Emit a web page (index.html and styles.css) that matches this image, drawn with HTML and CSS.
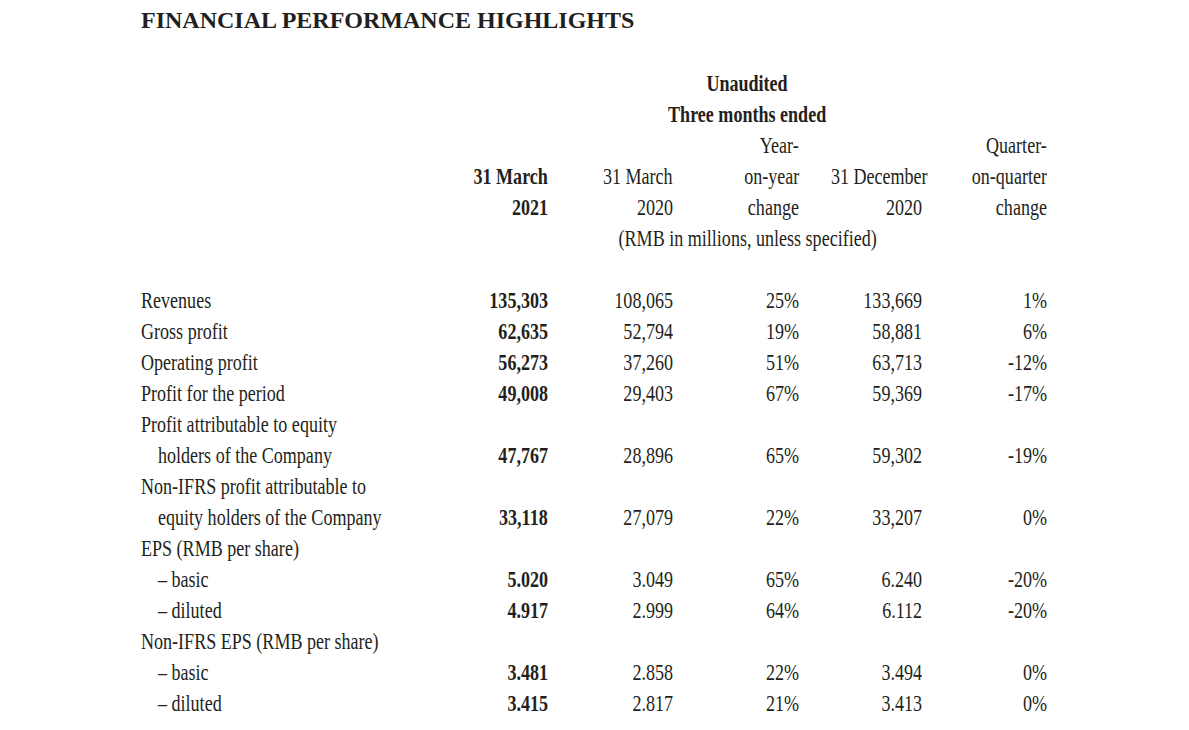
FILE: index.html
```html
<!DOCTYPE html>
<html>
<head>
<meta charset="utf-8">
<link rel="stylesheet" href="styles.css">
</head>
<body>
<div class="page">
  <h1 class="title">FINANCIAL PERFORMANCE HIGHLIGHTS</h1>
  <div class="table">
    <div class="row"><div class="cell wide b"><span class="t">Unaudited</span></div></div>
    <div class="row"><div class="cell wide b"><span class="t">Three months ended</span></div></div>
    <div class="row">
      <div class="cell lab"></div><div class="cell num"></div><div class="cell num"></div>
      <div class="cell num"><span class="t">Year-</span></div><div class="cell num"></div>
      <div class="cell num"><span class="t">Quarter-</span></div>
    </div>
    <div class="row">
      <div class="cell lab"></div>
      <div class="cell num b"><span class="t">31 March</span></div>
      <div class="cell num"><span class="t">31 March</span></div>
      <div class="cell num"><span class="t">on-year</span></div>
      <div class="cell num"><span class="t">31 December</span></div>
      <div class="cell num"><span class="t">on-quarter</span></div>
    </div>
    <div class="row">
      <div class="cell lab"></div>
      <div class="cell num b"><span class="t">2021</span></div>
      <div class="cell num"><span class="t">2020</span></div>
      <div class="cell num"><span class="t">change</span></div>
      <div class="cell num"><span class="t">2020</span></div>
      <div class="cell num"><span class="t">change</span></div>
    </div>
    <div class="row"><div class="cell wide"><span class="t">(RMB in millions, unless specified)</span></div></div>
    <div class="row blank"></div>

    <div class="row">
      <div class="cell lab"><span class="t">Revenues</span></div>
      <div class="cell num b"><span class="t">135,303</span></div>
      <div class="cell num"><span class="t">108,065</span></div>
      <div class="cell num"><span class="t">25%</span></div>
      <div class="cell num"><span class="t">133,669</span></div>
      <div class="cell num"><span class="t">1%</span></div>
    </div>
    <div class="row">
      <div class="cell lab"><span class="t">Gross profit</span></div>
      <div class="cell num b"><span class="t">62,635</span></div>
      <div class="cell num"><span class="t">52,794</span></div>
      <div class="cell num"><span class="t">19%</span></div>
      <div class="cell num"><span class="t">58,881</span></div>
      <div class="cell num"><span class="t">6%</span></div>
    </div>
    <div class="row">
      <div class="cell lab"><span class="t">Operating profit</span></div>
      <div class="cell num b"><span class="t">56,273</span></div>
      <div class="cell num"><span class="t">37,260</span></div>
      <div class="cell num"><span class="t">51%</span></div>
      <div class="cell num"><span class="t">63,713</span></div>
      <div class="cell num"><span class="t">-12%</span></div>
    </div>
    <div class="row">
      <div class="cell lab"><span class="t">Profit for the period</span></div>
      <div class="cell num b"><span class="t">49,008</span></div>
      <div class="cell num"><span class="t">29,403</span></div>
      <div class="cell num"><span class="t">67%</span></div>
      <div class="cell num"><span class="t">59,369</span></div>
      <div class="cell num"><span class="t">-17%</span></div>
    </div>
    <div class="row">
      <div class="cell lab"><span class="t">Profit attributable to equity</span></div>
    </div>
    <div class="row">
      <div class="cell lab ind"><span class="t">holders of the Company</span></div>
      <div class="cell num b"><span class="t">47,767</span></div>
      <div class="cell num"><span class="t">28,896</span></div>
      <div class="cell num"><span class="t">65%</span></div>
      <div class="cell num"><span class="t">59,302</span></div>
      <div class="cell num"><span class="t">-19%</span></div>
    </div>
    <div class="row">
      <div class="cell lab"><span class="t">Non-IFRS profit attributable to</span></div>
    </div>
    <div class="row">
      <div class="cell lab ind"><span class="t">equity holders of the Company</span></div>
      <div class="cell num b"><span class="t">33,118</span></div>
      <div class="cell num"><span class="t">27,079</span></div>
      <div class="cell num"><span class="t">22%</span></div>
      <div class="cell num"><span class="t">33,207</span></div>
      <div class="cell num"><span class="t">0%</span></div>
    </div>
    <div class="row">
      <div class="cell lab"><span class="t">EPS (RMB per share)</span></div>
    </div>
    <div class="row">
      <div class="cell lab ind"><span class="t">– basic</span></div>
      <div class="cell num b"><span class="t">5.020</span></div>
      <div class="cell num"><span class="t">3.049</span></div>
      <div class="cell num"><span class="t">65%</span></div>
      <div class="cell num"><span class="t">6.240</span></div>
      <div class="cell num"><span class="t">-20%</span></div>
    </div>
    <div class="row">
      <div class="cell lab ind"><span class="t">– diluted</span></div>
      <div class="cell num b"><span class="t">4.917</span></div>
      <div class="cell num"><span class="t">2.999</span></div>
      <div class="cell num"><span class="t">64%</span></div>
      <div class="cell num"><span class="t">6.112</span></div>
      <div class="cell num"><span class="t">-20%</span></div>
    </div>
    <div class="row">
      <div class="cell lab"><span class="t">Non-IFRS EPS (RMB per share)</span></div>
    </div>
    <div class="row">
      <div class="cell lab ind"><span class="t">– basic</span></div>
      <div class="cell num b"><span class="t">3.481</span></div>
      <div class="cell num"><span class="t">2.858</span></div>
      <div class="cell num"><span class="t">22%</span></div>
      <div class="cell num"><span class="t">3.494</span></div>
      <div class="cell num"><span class="t">0%</span></div>
    </div>
    <div class="row">
      <div class="cell lab ind"><span class="t">– diluted</span></div>
      <div class="cell num b"><span class="t">3.415</span></div>
      <div class="cell num"><span class="t">2.817</span></div>
      <div class="cell num"><span class="t">21%</span></div>
      <div class="cell num"><span class="t">3.413</span></div>
      <div class="cell num"><span class="t">0%</span></div>
    </div>
  </div>
</div>
</body>
</html>
```

FILE: styles.css
```css
html, body {
  margin: 0;
  padding: 0;
  background: #ffffff;
}

body {
  font-family: "Liberation Serif", "Times New Roman", serif;
  color: #231f20;
  overflow: hidden;
}

.page {
  padding: 6px 0 0 141px;
}

.title {
  margin: 0;
  font-size: 24px;
  line-height: 28px;
  font-weight: bold;
  letter-spacing: 0;
}

.table {
  margin-top: 34px;
  font-size: 24px;
}

.row {
  display: grid;
  grid-template-columns: 307px 100px 125px 126px 123px 125px;
  height: 31px;
  line-height: 31px;
}

.cell {
  white-space: nowrap;
}

.lab {
  text-align: left;
}

.lab .t {
  transform-origin: left center;
}

.ind {
  padding-left: 17px;
}

.num {
  text-align: right;
}

.num .t {
  transform-origin: right center;
}

.wide {
  grid-column: 2 / 7;
  text-align: center;
}

.wide .t {
  transform-origin: center center;
}

.b {
  font-weight: bold;
}

.t {
  display: inline-block;
  transform: scaleX(0.752);
}
```
